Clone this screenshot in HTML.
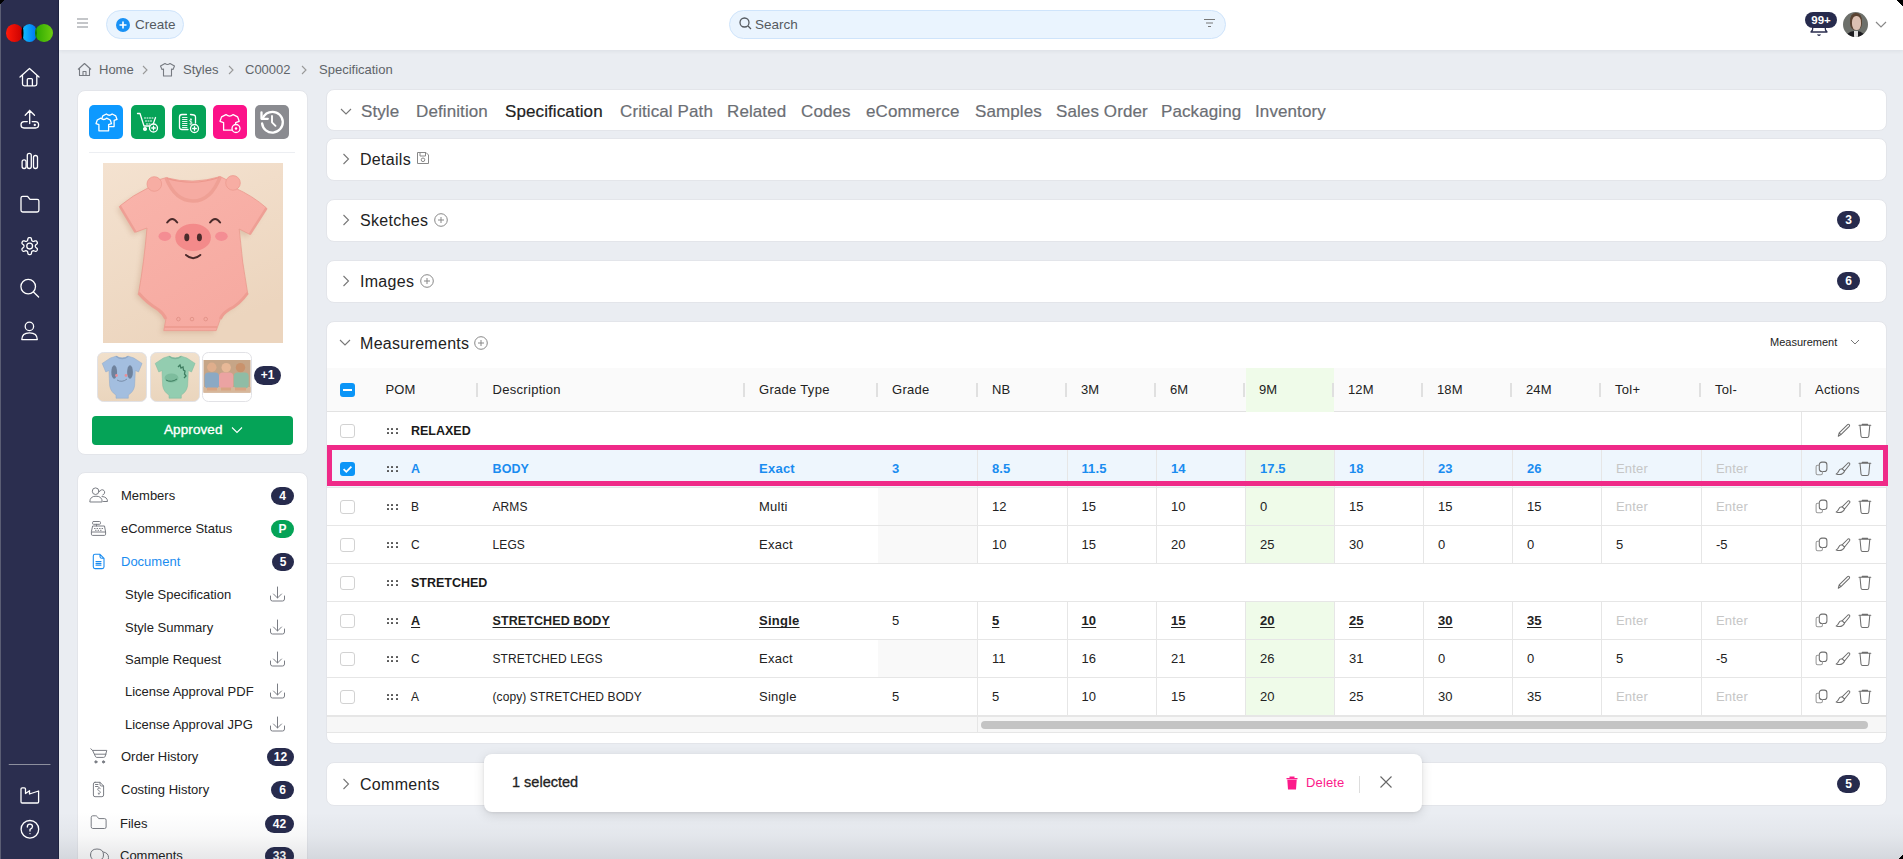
<!DOCTYPE html>
<html><head><meta charset="utf-8">
<style>
*{box-sizing:border-box;margin:0;padding:0}
html,body{width:1903px;height:859px;overflow:hidden}
body{background:#eaedf2;font-family:"Liberation Sans",sans-serif;color:#222;position:relative}
.a{position:absolute}
.t{position:absolute;white-space:nowrap;line-height:1}
#sb{left:0;top:0;width:59px;height:859px;background:#2b2e4f;border-right:1px solid #1f2340}
#hd{left:59px;top:0;width:1844px;height:50px;background:#fff;box-shadow:0 1px 4px rgba(30,40,60,.07)}
.card{position:absolute;background:#fff;border:1px solid #e3e5ea;border-radius:8px}
.badge{position:absolute;background:#272b4d;color:#fff;font-weight:bold;font-size:12px;height:18px;border-radius:9px;text-align:center;line-height:18px}
svg{position:absolute;overflow:visible}
</style></head><body>

<div id="sb" class="a">
 <div class="a" style="left:0;top:0;width:1px;height:859px;background:#5b5e74"></div>
 <div class="a" style="left:0;top:0;width:5px;height:5px;background:linear-gradient(135deg,#000 50%,transparent 50%)"></div>
 <div class="a" style="left:5.5px;top:24px;width:17.5px;height:18px;border-radius:50%;background:linear-gradient(90deg,#ff1a0a,#c80000);mix-blend-mode:normal"></div>
 <div class="a" style="left:21.5px;top:24px;width:15.5px;height:18px;border-radius:50%;background:linear-gradient(90deg,#10c0ff,#0070f0);"></div>
 <div class="a" style="left:35px;top:24px;width:17.5px;height:18px;border-radius:50%;background:linear-gradient(90deg,#2aa800,#6ccc10);"></div>
 <svg width="59" height="60" style="left:0;top:0"><path d="M22.5 26 Q20.5 33 22.5 40 Q24.5 33 22.5 26Z" fill="#000"/><path d="M36 27 Q34.3 33 36 39 Q37.7 33 36 27Z" fill="#0a6a10"/></svg>
 <svg width="59" height="859" style="left:0;top:0" fill="none" stroke="#fff" stroke-width="1.3" stroke-linecap="round" stroke-linejoin="round">
  <path d="M20 77 L29.5 68.5 L39 77 M22.5 75 V84 Q22.5 85.8 24.3 85.8 H35 Q36.8 85.8 36.8 84 V75 M27.3 85.8 V79.5 Q27.3 78.6 28.2 78.6 H31.5 Q32.4 78.6 32.4 79.5 V85.8"/>
  <path d="M29.7 123.5 V110.5 M25.2 115.3 L29.7 110.5 L34.5 115.3 M27.3 121.6 H24 Q21 121.6 21 124.8 Q21 128 24 128 H35.5 Q38.6 128 38.6 124.8 Q38.6 121.6 35.5 121.6 H32.2"/><circle cx="34.8" cy="124.9" r=".5" fill="#fff"/>
  <rect x="22.1" y="159.8" width="4" height="8.7" rx="2"/><rect x="27.3" y="153.3" width="4" height="15.2" rx="2"/><rect x="33.5" y="155.5" width="4" height="13" rx="2"/>
  <path d="M21 198 Q21 196.3 22.7 196.3 H27.6 L30 199.3 H37.2 Q38.9 199.3 38.9 201 V210.2 Q38.9 212 37.2 212 H22.7 Q21 212 21 210.2 Z"/>
  <circle cx="29.66" cy="246.1" r="2.9"/>
  <path d="M35.36 246.10 L35.36 246.30 L35.37 246.50 L35.40 246.70 L35.47 246.92 L35.61 247.15 L35.87 247.42 L36.28 247.75 L36.75 248.13 L37.12 248.52 L37.33 248.89 L37.39 249.22 L37.36 249.53 L37.27 249.81 L37.16 250.09 L37.02 250.35 L36.86 250.60 L36.68 250.84 L36.48 251.05 L36.23 251.23 L35.91 251.34 L35.49 251.35 L34.97 251.22 L34.40 251.01 L33.91 250.82 L33.54 250.73 L33.27 250.72 L33.05 250.77 L32.86 250.85 L32.68 250.94 L32.51 251.04 L32.34 251.14 L32.17 251.25 L32.01 251.37 L31.86 251.54 L31.73 251.78 L31.62 252.14 L31.54 252.66 L31.44 253.26 L31.29 253.78 L31.08 254.14 L30.82 254.35 L30.54 254.48 L30.25 254.55 L29.96 254.59 L29.66 254.60 L29.36 254.59 L29.07 254.55 L28.78 254.48 L28.50 254.35 L28.24 254.14 L28.03 253.78 L27.88 253.26 L27.78 252.66 L27.70 252.14 L27.59 251.78 L27.46 251.54 L27.31 251.37 L27.15 251.25 L26.98 251.14 L26.81 251.04 L26.64 250.94 L26.46 250.85 L26.27 250.77 L26.05 250.72 L25.78 250.73 L25.41 250.82 L24.92 251.01 L24.35 251.22 L23.83 251.35 L23.41 251.34 L23.09 251.23 L22.84 251.05 L22.64 250.84 L22.46 250.60 L22.30 250.35 L22.16 250.09 L22.05 249.81 L21.96 249.53 L21.93 249.22 L21.99 248.89 L22.20 248.52 L22.57 248.13 L23.04 247.75 L23.45 247.42 L23.71 247.15 L23.85 246.92 L23.92 246.70 L23.95 246.50 L23.96 246.30 L23.96 246.10 L23.96 245.90 L23.95 245.70 L23.92 245.50 L23.85 245.28 L23.71 245.05 L23.45 244.78 L23.04 244.45 L22.57 244.07 L22.20 243.68 L21.99 243.31 L21.93 242.98 L21.96 242.67 L22.05 242.39 L22.16 242.11 L22.30 241.85 L22.46 241.60 L22.64 241.36 L22.84 241.15 L23.09 240.97 L23.41 240.86 L23.83 240.85 L24.35 240.98 L24.92 241.19 L25.41 241.38 L25.78 241.47 L26.05 241.48 L26.27 241.43 L26.46 241.35 L26.64 241.26 L26.81 241.16 L26.98 241.06 L27.15 240.95 L27.31 240.83 L27.46 240.66 L27.59 240.42 L27.70 240.06 L27.78 239.54 L27.88 238.94 L28.03 238.42 L28.24 238.06 L28.50 237.85 L28.78 237.72 L29.07 237.65 L29.36 237.61 L29.66 237.60 L29.96 237.61 L30.25 237.65 L30.54 237.72 L30.82 237.85 L31.08 238.06 L31.29 238.42 L31.44 238.94 L31.54 239.54 L31.62 240.06 L31.73 240.42 L31.86 240.66 L32.01 240.83 L32.17 240.95 L32.34 241.06 L32.51 241.16 L32.68 241.26 L32.86 241.35 L33.05 241.43 L33.27 241.48 L33.54 241.47 L33.91 241.38 L34.40 241.19 L34.97 240.98 L35.49 240.85 L35.91 240.86 L36.23 240.97 L36.48 241.15 L36.68 241.36 L36.86 241.60 L37.02 241.85 L37.16 242.11 L37.27 242.39 L37.36 242.67 L37.39 242.98 L37.33 243.31 L37.12 243.68 L36.75 244.07 L36.28 244.45 L35.87 244.78 L35.61 245.05 L35.47 245.28 L35.40 245.50 L35.37 245.70 L35.36 245.90 Z"/>
  <circle cx="28.2" cy="286.6" r="7.3"/><path d="M33.5 292 L38.6 297"/>
  <circle cx="29.4" cy="326.4" r="4.2"/><path d="M21.8 339.6 Q21.8 332.8 29.5 332.8 Q37.3 332.8 37.3 339.6 Z"/>
  <path d="M9.2 764.5 H50" stroke="#8d8f9e" stroke-width="1.2"/>
  <path d="M21 789 Q21 787.8 22.2 787.8 H24.3 Q25.5 787.8 25.5 789 V793.5 L29.5 790.7 V794 L38.6 791 V801.8 Q38.6 803 37.4 803 H22.2 Q21 803 21 801.8 Z"/>
  <circle cx="29.9" cy="829.3" r="8.8"/><path d="M27.3 827 Q27.3 824.2 29.9 824.2 Q32.5 824.2 32.5 826.6 Q32.5 828.3 30 829.4 V831"/><circle cx="30" cy="833.6" r=".7" fill="#fff" stroke="none"/>
 </svg>
</div>
<div id="hd" class="a">
 <svg width="12" height="10" style="left:18px;top:18px" stroke="#8a8d93" stroke-width="1.2"><path d="M0 1H11M0 5H11M0 9H11"/></svg>
 <div class="a" style="left:47px;top:10px;width:78px;height:29px;border-radius:15px;background:#eaf4fe;border:1px solid #cfe4fb"></div>
 <div class="a" style="left:57px;top:17.5px;width:14px;height:14px;border-radius:50%;background:#1891f5"></div>
 <svg width="14" height="14" style="left:57px;top:17.5px" stroke="#fff" stroke-width="1.6"><path d="M7 3.5V10.5M3.5 7H10.5"/></svg>
 <div class="t" style="left:76px;top:18px;font-size:13.5px;color:#555a60">Create</div>
 <div class="a" style="left:670px;top:10px;width:497px;height:29px;border-radius:15px;background:#eaf4fe;border:1px solid #cfe4fb"></div>
 <svg width="14" height="14" style="left:680px;top:17px" fill="none" stroke="#555a60" stroke-width="1.3"><circle cx="5.5" cy="5.5" r="4.5"/><path d="M9 9L12 12"/></svg>
 <div class="t" style="left:696px;top:18px;font-size:13.5px;color:#555a60">Search</div>
 <svg width="14" height="12" style="left:1144px;top:18px" stroke="#777" stroke-width="1.2"><path d="M1 1.5H12M3 5H10M5 8.5H8"/></svg>
 <svg width="24" height="26" style="left:1748px;top:10px" fill="#fff" stroke="#2b2e4f" stroke-width="1.3" stroke-linejoin="round"><path d="M6 15 Q6 11 12 11 Q18 11 18 15 L18.5 20 L20 22 H4 L5.5 20 Z"/><path d="M10.5 24.5 L12 25.5 L13.5 24.5" fill="none" stroke-width="1.2"/></svg>
 <div class="badge" style="left:1746px;top:12px;width:32px;height:16px;line-height:16px;font-size:11.5px;border-radius:8px">99+</div>
 <div class="a" style="left:1784px;top:12px;width:25px;height:25px;border-radius:50%;overflow:hidden;background:#6d706b">
   <div class="a" style="left:7px;top:1px;width:12px;height:17px;border-radius:45% 45% 40% 40%;background:#5a4332"></div>
   <div class="a" style="left:8.5px;top:4px;width:9px;height:14px;border-radius:45% 45% 45% 45%;background:#dcc0b2"></div>
   <div class="a" style="left:2px;top:18.5px;width:21px;height:10px;border-radius:9px 9px 0 0;background:#1c1c20"></div>
   <div class="a" style="left:10.5px;top:19px;width:4.5px;height:7px;background:#e0e0e0"></div>
 </div>
 <svg width="12" height="8" style="left:1816px;top:21px" fill="none" stroke="#888" stroke-width="1.2"><path d="M1 1L6 6L11 1"/></svg>
</div>


<!-- breadcrumb -->
<svg width="16" height="16" style="left:77px;top:62px" fill="none" stroke="#777b82" stroke-width="1.1" stroke-linejoin="round"><path d="M1 7.5L7.5 1.5L14 7.5M2.5 6.3V13.5H12.5V6.3M6 13.5V9.5H9V13.5"/></svg>
<div class="t" style="left:99px;top:63px;font-size:13px;color:#606469">Home</div>
<svg width="8" height="10" style="left:141px;top:65px" fill="none" stroke="#999" stroke-width="1.1"><path d="M2 1L6 5L2 9"/></svg>
<svg width="18" height="16" style="left:159px;top:62px" fill="none" stroke="#777b82" stroke-width="1.1" stroke-linejoin="round"><path d="M6 1.5L1.5 4L3 7.5L4.5 7V14H12.5V7L14 7.5L15.5 4L11 1.5Q8.5 3.5 6 1.5Z"/></svg>
<div class="t" style="left:183px;top:63px;font-size:13px;color:#606469">Styles</div>
<svg width="8" height="10" style="left:227px;top:65px" fill="none" stroke="#999" stroke-width="1.1"><path d="M2 1L6 5L2 9"/></svg>
<div class="t" style="left:245px;top:63px;font-size:13px;color:#606469">C00002</div>
<svg width="8" height="10" style="left:300px;top:65px" fill="none" stroke="#999" stroke-width="1.1"><path d="M2 1L6 5L2 9"/></svg>
<div class="t" style="left:319px;top:63px;font-size:13px;color:#606469">Specification</div>

<!-- left card 1 -->
<div class="card" style="left:77px;top:90px;width:231px;height:365px"></div>
<div class="a" style="left:89px;top:105px;width:34px;height:34px;border-radius:5px;background:#0d99ff"></div>
<div class="a" style="left:131px;top:105px;width:34px;height:34px;border-radius:5px;background:#05a357"></div>
<div class="a" style="left:172px;top:105px;width:34px;height:34px;border-radius:5px;background:#05a357"></div>
<div class="a" style="left:213px;top:105px;width:34px;height:34px;border-radius:5px;background:#fc1289"></div>
<div class="a" style="left:255px;top:105px;width:34px;height:34px;border-radius:5px;background:#8a8b90"></div>
<svg width="220" height="40" style="left:89px;top:105px" fill="none" stroke="#fff" stroke-width="1.3" stroke-linejoin="round" stroke-linecap="round">
<path transform="translate(12.5 9) scale(0.97)" d="M5 0 L1.3 1.9 L0 5.6 L3 6.6 V13 H13 V6.6 L16 5.6 L14.7 1.9 L11 0 Q8 2.6 5 0 Z" fill="#0d99ff" stroke-width="1.34"/><path transform="translate(7 13.2) scale(0.97)" d="M5 0 L1.3 1.9 L0 5.6 L3 6.6 V13 H13 V6.6 L16 5.6 L14.7 1.9 L11 0 Q8 2.6 5 0 Z" fill="#0d99ff" stroke-width="1.34"/>
<path d="M48.5 8.5 H51 L55 21 H63.5 L66.5 12.5"/><circle cx="56" cy="24" r="1.4" fill="#fff"/>
<path d="M55.5 13h1M58 13h1M60.5 13h1M63 13h1M56.5 16h1M59 16h1M61.5 16h1M57.5 19h1M60 19h1" stroke-width="1"/>
<circle cx="64.5" cy="23" r="4" fill="#05a357"/><path d="M64.5 21.2V24.8M62.7 23H66.3"/>
<path d="M97.5 9.5 H93 Q90.5 9.5 90.5 12 V22 Q90.5 24.5 93 24.5 H99 M101.5 9.5 Q106.5 9.5 106.5 12 V18"/>
<path d="M93.5 12.5H98M93.5 14.5H98M93.5 16.5H98M93.5 18.5H98M93.5 20.5H98M93.5 22.5H98" stroke-width=".9"/>
<path d="M102.6 14.5 Q101 14 100.6 15.3 Q100.6 16.5 102 16.8 Q103.4 17.2 103 18.5 Q102.5 19.5 100.8 19 M101.9 13.5V20" stroke-width=".8"/>
<circle cx="105.5" cy="23.5" r="4" fill="#05a357"/><path d="M105.5 21.7V25.3M103.7 23.5H107.3"/>
<path transform="translate(131 9.6) scale(1.2)" d="M5 0 L1.3 1.9 L0 5.6 L3 6.6 V13 H13 V6.6 L16 5.6 L14.7 1.9 L11 0 Q8 2.6 5 0 Z" fill="#fc1289" stroke-width="1.08"/>
<circle cx="147" cy="23.5" r="4" fill="#fc1289"/><circle cx="147" cy="23.5" r="1.2" fill="#fff" stroke="none"/>
<path d="M173.5 13.5 Q176.5 6.8 183.5 6.8 A10.4 10.4 0 1 1 173.1 18.5" stroke-width="2.3"/><path d="M172.5 7.5 V13.8 H178.8" stroke-width="2.3"/><path d="M183 11V17.3L186.5 20.8" stroke-width="1.9"/>
</svg>
<div class="a" style="left:89px;top:152px;width:206px;height:1px;background:#eceef2"></div>

<!-- main product image -->
<svg width="180" height="180" style="left:103px;top:163px">
 <defs>
  <linearGradient id="bgp" x1="0" y1="0" x2="0.4" y2="1"><stop offset="0" stop-color="#f4e2d0"/><stop offset="1" stop-color="#ecd5be"/></linearGradient>
  <linearGradient id="ones" x1="0" y1="0" x2="0.6" y2="1"><stop offset="0" stop-color="#f9b4ab"/><stop offset="1" stop-color="#f6aaa1"/></linearGradient>
  <filter id="sh" x="-10%" y="-10%" width="120%" height="120%"><feGaussianBlur stdDeviation="2.5"/></filter>
 </defs>
 <rect width="180" height="180" fill="url(#bgp)"/>
 <path transform="translate(-3 3)" d="M62.9 14.7 Q90 22 117.3 13.6 L124 17 L132 25 Q150 33 163.5 45 L146.7 71.3 L136.2 66 Q139 100 144.6 130 Q136 142 125.7 146.7 Q119 151 117.3 156 L113.2 167.6 L60.8 167.6 L62.9 156 Q61 151 55.5 146.7 Q44 140 35.6 130 Q41 100 44 65 L32.5 69.2 L16.8 43 Q30 32 45 25 L55 17 Z" fill="#c9a68c" opacity=".45" filter="url(#sh)"/>
 <path d="M62.9 14.7 Q90 22 117.3 13.6 L124 17 L132 25 Q150 33 163.5 45 L146.7 71.3 L136.2 66 Q139 100 144.6 130 Q136 142 125.7 146.7 Q119 151 117.3 156 L113.2 167.6 L60.8 167.6 L62.9 156 Q61 151 55.5 146.7 Q44 140 35.6 130 Q41 100 44 65 L32.5 69.2 L16.8 43 Q30 32 45 25 L55 17 Z" fill="url(#ones)" stroke="#eb998e" stroke-width=".8"/>
 <path d="M62.9 14.7 Q90 24 117.3 13.6 Q106 38 90 38 Q74 38 62.9 14.7 Z" fill="#f6aba2"/>
 <path d="M62.9 14.7 Q72 38 90 38 Q108 38 117.3 13.6" fill="none" stroke="#efa095" stroke-width="3.5"/>
 <path d="M64 15.5 Q90 23.5 116 14.5" fill="none" stroke="#ec978c" stroke-width="1.2"/>
 <circle cx="51.3" cy="21" r="7.3" fill="#f7ada3" stroke="#ec9a8f" stroke-width=".8"/><circle cx="130" cy="19.9" r="7.3" fill="#f7ada3" stroke="#ec9a8f" stroke-width=".8"/>
 <path d="M16.8 43 L32.5 69.2 M163.5 45 L146.7 71.3" stroke="#ee9f95" stroke-width="2.5"/>
 <path d="M35.6 130 Q44 140 55.5 146.7 Q61 151 62.9 156 M144.6 130 Q136 142 125.7 146.7 Q119 151 117.3 156" fill="none" stroke="#ee9d92" stroke-width="3"/>
 <path d="M61 164 H114" stroke="#ee9d92" stroke-width="2"/>
 <circle cx="75.4" cy="156.1" r="1.8" fill="#f4aca2" stroke="#dc8a80" stroke-width=".7"/><circle cx="89" cy="156.1" r="1.8" fill="#f4aca2" stroke="#dc8a80" stroke-width=".7"/><circle cx="102.7" cy="156.1" r="1.8" fill="#f4aca2" stroke="#dc8a80" stroke-width=".7"/>
 <ellipse cx="61.8" cy="73.3" rx="6.3" ry="4.6" fill="#f48d93"/><ellipse cx="118.4" cy="73.3" rx="6.3" ry="4.6" fill="#f48d93"/>
 <ellipse cx="90.1" cy="74.4" rx="17.8" ry="13.6" fill="#f38a8a"/>
 <ellipse cx="83.8" cy="74.4" rx="2.5" ry="3.8" fill="#4a2b2b"/><ellipse cx="96.4" cy="74.4" rx="2.5" ry="3.8" fill="#4a2b2b"/>
 <path d="M64.2 59.5 Q69.2 52.5 74.2 59.5 M107.1 59.5 Q112.1 52.5 117.1 59.5 M83 92 Q90.1 98.5 97.3 92" stroke="#4a2b2b" stroke-width="2" fill="none" stroke-linecap="round"/>
</svg>
<!-- thumbnails -->
<svg width="160" height="52" style="left:96px;top:351px">
 <defs><linearGradient id="tb" x1="0" y1="0" x2="0" y2="1"><stop offset="0" stop-color="#f1e0cb"/><stop offset="1" stop-color="#ead5bd"/></linearGradient></defs>
 <rect x="1.5" y="1.5" width="49" height="49" rx="6" fill="url(#tb)" stroke="#e2e2e6"/>
<path transform="translate(0 0)" d="M20 5.2 Q26.15 8.5 32.3 5.2 L37.9 7 L46.1 12.4 L42.5 21 L39.3 19.5 Q39 28 38.6 34.9 Q37.5 41 32.3 44 V47.2 H20 V44 Q14.8 41 13.7 34.9 Q13.3 28 13 19.5 L9.8 21 L6.2 12.4 L14.4 7 Z" fill="#a3bedf" stroke="#8fa9c9" stroke-width=".5"/>
 <path d="M20 5.2 Q26.15 10 32.3 5.2" fill="none" stroke="#8ea8c8" stroke-width="1.2"/>
 <ellipse cx="18.2" cy="21" rx="2.9" ry="6.8" fill="#6f829c"/><ellipse cx="34" cy="21" rx="2.9" ry="6.8" fill="#6f829c"/>
 <circle cx="20.5" cy="24.5" r="1.4" fill="#e88f98"/><circle cx="30" cy="24.5" r="1.4" fill="#e88f98"/>
 <path d="M21 29 Q26 32 31 28" fill="none" stroke="#6f829c" stroke-width=".8"/>
 <rect x="54.5" y="1.5" width="49" height="49" rx="6" fill="url(#tb)" stroke="#e2e2e6"/>
<path transform="translate(53 0)" d="M20 5.2 Q26.15 8.5 32.3 5.2 L37.9 7 L46.1 12.4 L42.5 21 L39.3 19.5 Q39 28 38.6 34.9 Q37.5 41 32.3 44 V47.2 H20 V44 Q14.8 41 13.7 34.9 Q13.3 28 13 19.5 L9.8 21 L6.2 12.4 L14.4 7 Z" fill="#93cdb0" stroke="#7fb99c" stroke-width=".5"/>
 <path d="M73 5.2 Q79.15 10 85.3 5.2" fill="none" stroke="#7db59a" stroke-width="1.2"/>
 <ellipse cx="75.5" cy="27" rx="7" ry="4.5" fill="#7dbc9d"/>
 <path d="M70 29 Q75 32 81 28" fill="none" stroke="#3e7d60" stroke-width="1"/>
 <path d="M82 16 L84 14 L85 17 L87 16 L87.5 19 L89 20 L88.5 23 L90 25 L88 27" fill="none" stroke="#3e7d60" stroke-width="1.3"/>
 <rect x="106.5" y="1.5" width="49" height="49" rx="6" fill="#fff" stroke="#e2e2e6"/>
 <rect x="107.5" y="9" width="47" height="32.6" fill="#c6a587"/>
 <rect x="107.5" y="36" width="47" height="5.6" fill="#d7b79a"/>
 <rect x="108.6" y="21.5" width="14.4" height="16" rx="4" fill="#8ba9c4"/><rect x="123" y="21.5" width="14.3" height="16" rx="4" fill="#eba3a2"/><rect x="137.8" y="21.5" width="14.9" height="16" rx="4" fill="#8fbca5"/>
 <circle cx="115.8" cy="16.3" r="4.7" fill="#dfae8c"/><circle cx="130.2" cy="16.6" r="4.7" fill="#e7b897"/><circle cx="144.5" cy="16.6" r="4.7" fill="#c9926c"/>
 <path d="M111 38 H121 M125 38 H135 M139 38 H150" stroke="#d9a583" stroke-width="3"/>
</svg>
<div class="badge" style="left:254px;top:366px;width:27px;height:19px;border-radius:10px;line-height:19px;font-size:12px">+1</div>
<div class="a" style="left:92px;top:416px;width:201px;height:29px;border-radius:4px;background:#05a357"></div>
<div class="t" style="left:164px;top:422.5px;font-size:13.5px;color:#fff;-webkit-text-stroke:0.35px #fff;letter-spacing:0.1px">Approved</div>
<svg width="12" height="8" style="left:231px;top:426px" fill="none" stroke="#fff" stroke-width="1.1"><path d="M1 1.5L6 6.5L11 1.5"/></svg>

<!-- left card 2 -->
<div class="card" style="left:77px;top:472px;width:231px;height:420px"></div>
<svg width="230" height="400" style="left:78px;top:472px" fill="none" stroke="#7a7d84" stroke-width="1" stroke-linejoin="round" stroke-linecap="round">
 <!-- members -->
 <path d="M21.5 19.5 A2.7 2.7 0 1 1 24.8 23" /><path d="M24 24.5 Q29.5 24.8 29.5 29.5 H25.5"/>
 <circle cx="17.6" cy="19.2" r="3.3" fill="#fff"/><path d="M11.8 29.6 Q11.8 24.2 18 24.2 Q24.2 24.2 24.2 29.6 Z" fill="#fff"/>
 <!-- register -->
 <rect x="14.5" y="49.5" width="8" height="2.8" rx="1"/><path d="M18.5 52.3 V54"/>
 <path d="M15 54 H26.5 L27.6 60 V62.2 Q27.6 63.4 26.4 63.4 H14.6 Q13.4 63.4 13.4 62.2 V60 Z M13.4 60 H27.6"/>
 <path d="M16.5 56.5h.6M19 56.5h.6M21.5 56.5h.6M24 56.5h.6M17.5 58.3h.6M20 58.3h.6M22.5 58.3h.6" stroke-width="1"/>
 <!-- document (blue) -->
 <path d="M17 82.3 H22 L26 86.3 V94.8 Q26 96.6 24.2 96.6 H17 Q15.3 96.6 15.3 94.8 V84 Q15.3 82.3 17 82.3 Z M22 82.3 V84.5 Q22 86.3 23.8 86.3 H26" stroke="#1a8cf0" stroke-width="1.1"/>
 <path d="M18 89.5 H23 M18 91.3 H23 M18 93.1 H23" stroke="#1a8cf0" stroke-width="1.2"/>
 <!-- downloads -->
 <g id="dl"><path d="M199.5 115 V126 M195.5 122 L199.5 126 L203.5 122 M192.5 124 V127 Q192.5 129 194.5 129 H204.5 Q206.5 129 206.5 127 V124"/></g>
 <path d="M199.5 148 V159 M195.5 155 L199.5 159 L203.5 155 M192.5 157 V160 Q192.5 162 194.5 162 H204.5 Q206.5 162 206.5 160 V157"/>
 <path d="M199.5 180 V191 M195.5 187 L199.5 191 L203.5 187 M192.5 189 V192 Q192.5 194 194.5 194 H204.5 Q206.5 194 206.5 192 V189"/>
 <path d="M199.5 212 V223 M195.5 219 L199.5 223 L203.5 219 M192.5 221 V224 Q192.5 226 194.5 226 H204.5 Q206.5 226 206.5 224 V221"/>
 <path d="M199.5 245 V256 M195.5 252 L199.5 256 L203.5 252 M192.5 254 V257 Q192.5 259 194.5 259 H204.5 Q206.5 259 206.5 257 V254"/>
 <!-- cart -->
 <path d="M12.8 276.8 L14.6 278.4 H28.8 L27.2 284.2 Q26.9 285.4 25.7 285.4 H18.8 Q17.6 285.4 17.3 284.2 L14.6 278.4 M16.6 282.2 H28"/>
 <circle cx="17.9" cy="289.9" r="1.1" fill="#7a7d84"/><circle cx="25.5" cy="289.9" r="1.1" fill="#7a7d84"/>
 <!-- costing -->
 <path d="M17 310.3 H22 L25.6 314 V323 Q25.6 324.7 23.9 324.7 H17 Q15.4 324.7 15.4 323 V312 Q15.4 310.3 17 310.3 Z M22 310.3 V312.5 Q22 314 23.5 314 H25.6 M17.5 312.5 H20 M17.5 314.5 H20"/>
 <path d="M22.3 316.5 Q21.4 315.8 20.4 316.2 Q19.3 316.8 19.9 318 Q20.4 318.8 21.3 319 Q22.6 319.4 22.3 320.7 Q21.8 321.8 20.2 321.3 M20.9 315.3 V316 M20.9 321.6 V322.4" stroke-width=".9"/>
 <!-- folder -->
 <path d="M13.2 345.3 Q13.2 343.8 14.7 343.8 H17.8 Q18.6 343.8 19.2 344.6 L20.7 346.6 H26.6 Q28.1 346.6 28.1 348.1 V355 Q28.1 356.5 26.6 356.5 H14.7 Q13.2 356.5 13.2 355 Z"/>
 <!-- comments -->
 <path d="M12.5 383 Q12.5 377 19 377 Q25.5 377 25.5 383 Q25.5 388.5 19 388.5 Q17.5 388.5 16.3 388 L13.3 389.5 L14 386.8 Q12.5 385.3 12.5 383 Z M25.5 380 Q30.5 381 30.5 385.5 Q30.5 387.5 29.5 388.8"/>
</svg>
<div class="t" style="left:121px;top:489px;font-size:13px;color:#222">Members</div>
<div class="badge" style="left:271px;top:487px;width:23px">4</div>
<div class="t" style="left:121px;top:522px;font-size:13px;color:#222">eCommerce Status</div>
<div class="badge" style="left:271px;top:520px;width:23px;background:#05a357">P</div>
<div class="t" style="left:121px;top:555px;font-size:13px;color:#1a8cf0">Document</div>
<div class="badge" style="left:272px;top:553px;width:22px">5</div>
<div class="t" style="left:125px;top:588px;font-size:13px;color:#222">Style Specification</div>
<div class="t" style="left:125px;top:621px;font-size:13px;color:#222">Style Summary</div>
<div class="t" style="left:125px;top:653px;font-size:13px;color:#222">Sample Request</div>
<div class="t" style="left:125px;top:685px;font-size:13px;color:#222">License Approval PDF</div>
<div class="t" style="left:125px;top:718px;font-size:13px;color:#222">License Approval JPG</div>
<div class="t" style="left:121px;top:750px;font-size:13px;color:#222">Order History</div>
<div class="badge" style="left:267px;top:748px;width:27px">12</div>
<div class="t" style="left:121px;top:783px;font-size:13px;color:#222">Costing History</div>
<div class="badge" style="left:271px;top:781px;width:23px">6</div>
<div class="t" style="left:120px;top:817px;font-size:13px;color:#222">Files</div>
<div class="badge" style="left:265px;top:815px;width:29px">42</div>
<div class="t" style="left:120px;top:849px;font-size:13px;color:#222">Comments</div>
<div class="badge" style="left:265px;top:847px;width:29px">33</div>

<!-- main cards -->
<div class="card" style="left:326px;top:89px;width:1561px;height:42px"></div>
<svg width="12" height="8" style="left:340px;top:108px" fill="none" stroke="#777" stroke-width="1.1"><path d="M1 1L6 6L11 1"/></svg>
<div class="t" style="left:361px;top:103px;font-size:17px;letter-spacing:0.1px;-webkit-text-stroke:0.2px #6b6e74;color:#6b6e74">Style</div>
<div class="t" style="left:416px;top:103px;font-size:17px;letter-spacing:0.1px;-webkit-text-stroke:0.2px #6b6e74;color:#6b6e74">Definition</div>
<div class="t" style="left:505px;top:103px;font-size:17px;letter-spacing:0.1px;-webkit-text-stroke:0.2px #222;color:#222">Specification</div>
<div class="t" style="left:620px;top:103px;font-size:17px;letter-spacing:0.1px;-webkit-text-stroke:0.2px #6b6e74;color:#6b6e74">Critical Path</div>
<div class="t" style="left:727px;top:103px;font-size:17px;letter-spacing:0.1px;-webkit-text-stroke:0.2px #6b6e74;color:#6b6e74">Related</div>
<div class="t" style="left:801px;top:103px;font-size:17px;letter-spacing:0.1px;-webkit-text-stroke:0.2px #6b6e74;color:#6b6e74">Codes</div>
<div class="t" style="left:866px;top:103px;font-size:17px;letter-spacing:0.1px;-webkit-text-stroke:0.2px #6b6e74;color:#6b6e74">eCommerce</div>
<div class="t" style="left:975px;top:103px;font-size:17px;letter-spacing:0.1px;-webkit-text-stroke:0.2px #6b6e74;color:#6b6e74">Samples</div>
<div class="t" style="left:1056px;top:103px;font-size:17px;letter-spacing:0.1px;-webkit-text-stroke:0.2px #6b6e74;color:#6b6e74">Sales Order</div>
<div class="t" style="left:1161px;top:103px;font-size:17px;letter-spacing:0.1px;-webkit-text-stroke:0.2px #6b6e74;color:#6b6e74">Packaging</div>
<div class="t" style="left:1255px;top:103px;font-size:17px;letter-spacing:0.1px;-webkit-text-stroke:0.2px #6b6e74;color:#6b6e74">Inventory</div>
<div class="card" style="left:326px;top:138px;width:1561px;height:43px"></div>
<svg width="8" height="12" style="left:342px;top:153px" fill="none" stroke="#777" stroke-width="1.1"><path d="M1.5 1L6.5 6L1.5 11"/></svg>
<div class="t" style="left:360px;top:152px;font-size:16px;letter-spacing:0.3px;color:#222">Details</div>
<svg width="14" height="14" style="left:416px;top:151px" fill="none" stroke="#888" stroke-width="1"><path d="M1.5 1.5H10L12.5 4V12.5H1.5Z M4 1.5V5H9.5V1.5"/><circle cx="7" cy="8.8" r="1.8"/></svg>
<div class="card" style="left:326px;top:199px;width:1561px;height:43px"></div>
<svg width="8" height="12" style="left:342px;top:214px" fill="none" stroke="#777" stroke-width="1.1"><path d="M1.5 1L6.5 6L1.5 11"/></svg>
<div class="t" style="left:360px;top:213px;font-size:16px;letter-spacing:0.3px;color:#222">Sketches</div>
<svg width="14" height="14" style="left:434px;top:213px" fill="none" stroke="#888" stroke-width="1"><circle cx="7" cy="7" r="6.3"/><path d="M7 4V10M4 7H10"/></svg>
<div class="badge" style="left:1837px;top:211px;width:23px">3</div>
<div class="card" style="left:326px;top:260px;width:1561px;height:43px"></div>
<svg width="8" height="12" style="left:342px;top:275px" fill="none" stroke="#777" stroke-width="1.1"><path d="M1.5 1L6.5 6L1.5 11"/></svg>
<div class="t" style="left:360px;top:274px;font-size:16px;letter-spacing:0.3px;color:#222">Images</div>
<svg width="14" height="14" style="left:420px;top:274px" fill="none" stroke="#888" stroke-width="1"><circle cx="7" cy="7" r="6.3"/><path d="M7 4V10M4 7H10"/></svg>
<div class="badge" style="left:1837px;top:272px;width:23px">6</div>
<div class="card" style="left:326px;top:321px;width:1561px;height:423px;overflow:hidden"></div>
<svg width="12" height="8" style="left:339px;top:339px" fill="none" stroke="#777" stroke-width="1.1"><path d="M1 1L6 6L11 1"/></svg>
<div class="t" style="left:360px;top:336px;font-size:16px;letter-spacing:0.3px;color:#222">Measurements</div>
<svg width="14" height="14" style="left:474px;top:336px" fill="none" stroke="#888" stroke-width="1"><circle cx="7" cy="7" r="6.3"/><path d="M7 4V10M4 7H10"/></svg>
<div class="t" style="left:1770px;top:337px;font-size:11px;color:#222">Measurement</div>
<svg width="10" height="7" style="left:1850px;top:339px" fill="none" stroke="#777" stroke-width="1"><path d="M1 1L5 5L9 1"/></svg>
<div class="a" style="left:327px;top:368px;width:1559px;height:44px;background:#fafafa;border-bottom:1px solid #e2e2e2"></div>
<div class="a" style="left:1246px;top:368px;width:88px;height:347px;background:#effbe9"></div>
<div class="a" style="left:476px;top:383px;width:1.5px;height:14px;background:#e0e0e0"></div>
<div class="a" style="left:743px;top:383px;width:1.5px;height:14px;background:#e0e0e0"></div>
<div class="a" style="left:876px;top:383px;width:1.5px;height:14px;background:#e0e0e0"></div>
<div class="a" style="left:976px;top:383px;width:1.5px;height:14px;background:#e0e0e0"></div>
<div class="a" style="left:1065px;top:383px;width:1.5px;height:14px;background:#e0e0e0"></div>
<div class="a" style="left:1154px;top:383px;width:1.5px;height:14px;background:#e0e0e0"></div>
<div class="a" style="left:1243px;top:383px;width:1.5px;height:14px;background:#e0e0e0"></div>
<div class="a" style="left:1332px;top:383px;width:1.5px;height:14px;background:#e0e0e0"></div>
<div class="a" style="left:1421px;top:383px;width:1.5px;height:14px;background:#e0e0e0"></div>
<div class="a" style="left:1510px;top:383px;width:1.5px;height:14px;background:#e0e0e0"></div>
<div class="a" style="left:1599px;top:383px;width:1.5px;height:14px;background:#e0e0e0"></div>
<div class="a" style="left:1699px;top:383px;width:1.5px;height:14px;background:#e0e0e0"></div>
<div class="a" style="left:1799px;top:383px;width:1.5px;height:14px;background:#e0e0e0"></div>
<div class="t" style="left:385.5px;top:382.8px;font-size:13px;letter-spacing:0.1px;color:#222">POM</div>
<div class="t" style="left:492.5px;top:382.8px;font-size:13px;letter-spacing:0.3px;color:#222">Description</div>
<div class="t" style="left:759px;top:382.8px;font-size:13px;letter-spacing:0.3px;color:#222">Grade Type</div>
<div class="t" style="left:892px;top:382.8px;font-size:13px;letter-spacing:0.3px;color:#222">Grade</div>
<div class="t" style="left:992px;top:382.8px;font-size:13px;letter-spacing:0.1px;color:#222">NB</div>
<div class="t" style="left:1081px;top:382.8px;font-size:13px;letter-spacing:0.1px;color:#222">3M</div>
<div class="t" style="left:1170px;top:382.8px;font-size:13px;letter-spacing:0.1px;color:#222">6M</div>
<div class="t" style="left:1259px;top:382.8px;font-size:13px;letter-spacing:0.1px;color:#222">9M</div>
<div class="t" style="left:1348px;top:382.8px;font-size:13px;letter-spacing:0.1px;color:#222">12M</div>
<div class="t" style="left:1437px;top:382.8px;font-size:13px;letter-spacing:0.1px;color:#222">18M</div>
<div class="t" style="left:1526px;top:382.8px;font-size:13px;letter-spacing:0.1px;color:#222">24M</div>
<div class="t" style="left:1615px;top:382.8px;font-size:13px;letter-spacing:0.3px;color:#222">Tol+</div>
<div class="t" style="left:1715px;top:382.8px;font-size:13px;letter-spacing:0.3px;color:#222">Tol-</div>
<div class="t" style="left:1815px;top:382.8px;font-size:13px;letter-spacing:0.3px;color:#222">Actions</div>
<div class="a" style="left:340px;top:383px;width:15px;height:14px;border-radius:3px;background:#0b95f7"></div>
<div class="a" style="left:343px;top:389px;width:9px;height:2px;background:#fff"></div>
<div class="a" style="left:327px;top:412px;width:1559px;height:38px;background:#fff;border-bottom:1px solid #e6e6e6"></div>
<div class="a" style="left:1801px;top:412px;width:1px;height:37px;background:#e6e6e6"></div>
<div class="a" style="left:340px;top:424px;width:15px;height:14px;border-radius:3px;border:1px solid #d2d2d2;background:#fff"></div>
<div class="a" style="left:387.0px;top:428.0px;width:2px;height:2px;border-radius:.5px;background:#555"></div><div class="a" style="left:387.0px;top:432.4px;width:2px;height:2px;border-radius:.5px;background:#555"></div><div class="a" style="left:391.3px;top:428.0px;width:2px;height:2px;border-radius:.5px;background:#555"></div><div class="a" style="left:391.3px;top:432.4px;width:2px;height:2px;border-radius:.5px;background:#555"></div><div class="a" style="left:395.6px;top:428.0px;width:2px;height:2px;border-radius:.5px;background:#555"></div><div class="a" style="left:395.6px;top:432.4px;width:2px;height:2px;border-radius:.5px;background:#555"></div>
<div class="t" style="left:411px;top:425.0px;font-size:12.5px;font-weight:bold;color:#1a1a1a">RELAXED</div>
<svg width="16" height="16" style="left:1837px;top:423px" fill="none" stroke="#6e6e6e" stroke-width="1.05" stroke-linejoin="round" stroke-linecap="round"><path d="M1.3 13.2 L2.2 9.8 L10.6 1.6 Q11.4 0.9 12.2 1.7 Q13 2.5 12.3 3.3 L3.9 11.6 Z M2.2 9.8 L3.9 11.6"/></svg>
<svg width="16" height="16" style="left:1858px;top:423px" fill="none" stroke="#6e6e6e" stroke-width="1.05" stroke-linejoin="round" stroke-linecap="round"><path d="M1 2.3 H12.8 M4.2 2.3 V1.2 H9.6 V2.3 M2 2.3 L3 13 Q3.2 14.5 4.6 14.5 H9.2 Q10.6 14.5 10.8 13 L11.8 2.3"/></svg>
<div class="a" style="left:327px;top:450px;width:1559px;height:38px;background:#eef6fd;border-bottom:1px solid #e6e6e6"></div>
<div class="a" style="left:1246px;top:450px;width:88px;height:37px;background:#eaf8ea"></div>
<div class="a" style="left:977px;top:450px;width:1px;height:37px;background:#e6e6e6"></div>
<div class="a" style="left:1067px;top:450px;width:1px;height:37px;background:#e6e6e6"></div>
<div class="a" style="left:1156px;top:450px;width:1px;height:37px;background:#e6e6e6"></div>
<div class="a" style="left:1245px;top:450px;width:1px;height:37px;background:#e6e6e6"></div>
<div class="a" style="left:1334px;top:450px;width:1px;height:37px;background:#e6e6e6"></div>
<div class="a" style="left:1423px;top:450px;width:1px;height:37px;background:#e6e6e6"></div>
<div class="a" style="left:1512px;top:450px;width:1px;height:37px;background:#e6e6e6"></div>
<div class="a" style="left:1601px;top:450px;width:1px;height:37px;background:#e6e6e6"></div>
<div class="a" style="left:1701px;top:450px;width:1px;height:37px;background:#e6e6e6"></div>
<div class="a" style="left:1801px;top:450px;width:1px;height:37px;background:#e6e6e6"></div>
<div class="a" style="left:340px;top:462px;width:15px;height:14px;border-radius:3px;background:#0b95f7"></div>
<svg width="15" height="14" style="left:340px;top:462px" fill="none" stroke="#fff" stroke-width="1.8"><path d="M3.6 7.2 L6.3 9.8 L11.4 4.6"/></svg>
<div class="a" style="left:387.0px;top:466.0px;width:2px;height:2px;border-radius:.5px;background:#555"></div><div class="a" style="left:387.0px;top:470.4px;width:2px;height:2px;border-radius:.5px;background:#555"></div><div class="a" style="left:391.3px;top:466.0px;width:2px;height:2px;border-radius:.5px;background:#555"></div><div class="a" style="left:391.3px;top:470.4px;width:2px;height:2px;border-radius:.5px;background:#555"></div><div class="a" style="left:395.6px;top:466.0px;width:2px;height:2px;border-radius:.5px;background:#555"></div><div class="a" style="left:395.6px;top:470.4px;width:2px;height:2px;border-radius:.5px;background:#555"></div>
<div class="t" style="left:411px;top:462.75px;font-size:12.5px;letter-spacing:0.1px;color:#1a8cf0;font-weight:bold;">A</div>
<div class="t" style="left:492.5px;top:462.75px;font-size:12.5px;letter-spacing:0.1px;color:#1a8cf0;font-weight:bold;">BODY</div>
<div class="t" style="left:759px;top:462.3px;font-size:13px;letter-spacing:0.25px;color:#1a8cf0;font-weight:bold;">Exact</div>
<div class="t" style="left:892px;top:462.3px;font-size:13px;color:#1a8cf0;font-weight:bold">3</div>
<div class="t" style="left:992px;top:462.3px;font-size:13px;letter-spacing:0.1px;color:#1a8cf0;font-weight:bold;">8.5</div>
<div class="t" style="left:1081.5px;top:462.3px;font-size:13px;letter-spacing:0.1px;color:#1a8cf0;font-weight:bold;">11.5</div>
<div class="t" style="left:1171px;top:462.3px;font-size:13px;letter-spacing:0.1px;color:#1a8cf0;font-weight:bold;">14</div>
<div class="t" style="left:1260px;top:462.3px;font-size:13px;letter-spacing:0.1px;color:#1a8cf0;font-weight:bold;">17.5</div>
<div class="t" style="left:1349px;top:462.3px;font-size:13px;letter-spacing:0.1px;color:#1a8cf0;font-weight:bold;">18</div>
<div class="t" style="left:1438px;top:462.3px;font-size:13px;letter-spacing:0.1px;color:#1a8cf0;font-weight:bold;">23</div>
<div class="t" style="left:1527px;top:462.3px;font-size:13px;letter-spacing:0.1px;color:#1a8cf0;font-weight:bold;">26</div>
<div class="t" style="left:1616px;top:462.3px;font-size:13px;letter-spacing:0.2px;color:#c6c6c6">Enter</div>
<div class="t" style="left:1716px;top:462.3px;font-size:13px;letter-spacing:0.2px;color:#c6c6c6">Enter</div>
<svg width="16" height="16" style="left:1815px;top:461px" fill="none" stroke="#6e6e6e" stroke-width="1.05" stroke-linejoin="round" stroke-linecap="round"><rect x="4.3" y="1.1" width="7.6" height="9.4" rx="2.6"/><path d="M4.3 4.2 H2.6 Q1.1 4.2 1.1 5.7 V12.2 Q1.1 13.7 2.6 13.7 H5.9 Q7.4 13.7 7.4 12.2 V10.5" stroke="#999"/></svg>
<svg width="16" height="16" style="left:1835px;top:461px" fill="none" stroke="#6e6e6e" stroke-width="1.05" stroke-linejoin="round" stroke-linecap="round"><path d="M14.5 2.2 Q15.3 3.1 14.4 4 L9.6 10 L7.1 7.8 L13 2 Q13.8 1.4 14.5 2.2 Z M7.1 7.8 Q4.6 7.6 3.6 10.2 Q3 12.4 1.2 13 Q5 14.4 7.6 12.5 Q9.1 11.3 9.6 10"/></svg>
<svg width="16" height="16" style="left:1858px;top:461px" fill="none" stroke="#6e6e6e" stroke-width="1.05" stroke-linejoin="round" stroke-linecap="round"><path d="M1 2.3 H12.8 M4.2 2.3 V1.2 H9.6 V2.3 M2 2.3 L3 13 Q3.2 14.5 4.6 14.5 H9.2 Q10.6 14.5 10.8 13 L11.8 2.3"/></svg>
<div class="a" style="left:327px;top:488px;width:1559px;height:38px;background:#fff;border-bottom:1px solid #e6e6e6"></div>
<div class="a" style="left:1246px;top:488px;width:88px;height:37px;background:#effbe9"></div>
<div class="a" style="left:878px;top:488px;width:99px;height:37px;background:#f9f9f9"></div>
<div class="a" style="left:977px;top:488px;width:1px;height:37px;background:#e6e6e6"></div>
<div class="a" style="left:1067px;top:488px;width:1px;height:37px;background:#e6e6e6"></div>
<div class="a" style="left:1156px;top:488px;width:1px;height:37px;background:#e6e6e6"></div>
<div class="a" style="left:1245px;top:488px;width:1px;height:37px;background:#e6e6e6"></div>
<div class="a" style="left:1334px;top:488px;width:1px;height:37px;background:#e6e6e6"></div>
<div class="a" style="left:1423px;top:488px;width:1px;height:37px;background:#e6e6e6"></div>
<div class="a" style="left:1512px;top:488px;width:1px;height:37px;background:#e6e6e6"></div>
<div class="a" style="left:1601px;top:488px;width:1px;height:37px;background:#e6e6e6"></div>
<div class="a" style="left:1701px;top:488px;width:1px;height:37px;background:#e6e6e6"></div>
<div class="a" style="left:1801px;top:488px;width:1px;height:37px;background:#e6e6e6"></div>
<div class="a" style="left:340px;top:500px;width:15px;height:14px;border-radius:3px;border:1px solid #d2d2d2;background:#fff"></div>
<div class="a" style="left:387.0px;top:504.0px;width:2px;height:2px;border-radius:.5px;background:#555"></div><div class="a" style="left:387.0px;top:508.4px;width:2px;height:2px;border-radius:.5px;background:#555"></div><div class="a" style="left:391.3px;top:504.0px;width:2px;height:2px;border-radius:.5px;background:#555"></div><div class="a" style="left:391.3px;top:508.4px;width:2px;height:2px;border-radius:.5px;background:#555"></div><div class="a" style="left:395.6px;top:504.0px;width:2px;height:2px;border-radius:.5px;background:#555"></div><div class="a" style="left:395.6px;top:508.4px;width:2px;height:2px;border-radius:.5px;background:#555"></div>
<div class="t" style="left:411px;top:501.15000000000003px;font-size:12px;letter-spacing:0.1px;color:#222;font-weight:normal;">B</div>
<div class="t" style="left:492.5px;top:501.15000000000003px;font-size:12px;letter-spacing:0.1px;color:#222;font-weight:normal;">ARMS</div>
<div class="t" style="left:759px;top:500.3px;font-size:13px;letter-spacing:0.25px;color:#222;font-weight:normal;">Multi</div>
<div class="t" style="left:992px;top:500.3px;font-size:13px;letter-spacing:0.1px;color:#222;font-weight:normal;">12</div>
<div class="t" style="left:1081.5px;top:500.3px;font-size:13px;letter-spacing:0.1px;color:#222;font-weight:normal;">15</div>
<div class="t" style="left:1171px;top:500.3px;font-size:13px;letter-spacing:0.1px;color:#222;font-weight:normal;">10</div>
<div class="t" style="left:1260px;top:500.3px;font-size:13px;letter-spacing:0.1px;color:#222;font-weight:normal;">0</div>
<div class="t" style="left:1349px;top:500.3px;font-size:13px;letter-spacing:0.1px;color:#222;font-weight:normal;">15</div>
<div class="t" style="left:1438px;top:500.3px;font-size:13px;letter-spacing:0.1px;color:#222;font-weight:normal;">15</div>
<div class="t" style="left:1527px;top:500.3px;font-size:13px;letter-spacing:0.1px;color:#222;font-weight:normal;">15</div>
<div class="t" style="left:1616px;top:500.3px;font-size:13px;letter-spacing:0.2px;color:#c6c6c6">Enter</div>
<div class="t" style="left:1716px;top:500.3px;font-size:13px;letter-spacing:0.2px;color:#c6c6c6">Enter</div>
<svg width="16" height="16" style="left:1815px;top:499px" fill="none" stroke="#6e6e6e" stroke-width="1.05" stroke-linejoin="round" stroke-linecap="round"><rect x="4.3" y="1.1" width="7.6" height="9.4" rx="2.6"/><path d="M4.3 4.2 H2.6 Q1.1 4.2 1.1 5.7 V12.2 Q1.1 13.7 2.6 13.7 H5.9 Q7.4 13.7 7.4 12.2 V10.5" stroke="#999"/></svg>
<svg width="16" height="16" style="left:1835px;top:499px" fill="none" stroke="#6e6e6e" stroke-width="1.05" stroke-linejoin="round" stroke-linecap="round"><path d="M14.5 2.2 Q15.3 3.1 14.4 4 L9.6 10 L7.1 7.8 L13 2 Q13.8 1.4 14.5 2.2 Z M7.1 7.8 Q4.6 7.6 3.6 10.2 Q3 12.4 1.2 13 Q5 14.4 7.6 12.5 Q9.1 11.3 9.6 10"/></svg>
<svg width="16" height="16" style="left:1858px;top:499px" fill="none" stroke="#6e6e6e" stroke-width="1.05" stroke-linejoin="round" stroke-linecap="round"><path d="M1 2.3 H12.8 M4.2 2.3 V1.2 H9.6 V2.3 M2 2.3 L3 13 Q3.2 14.5 4.6 14.5 H9.2 Q10.6 14.5 10.8 13 L11.8 2.3"/></svg>
<div class="a" style="left:327px;top:526px;width:1559px;height:38px;background:#fff;border-bottom:1px solid #e6e6e6"></div>
<div class="a" style="left:1246px;top:526px;width:88px;height:37px;background:#effbe9"></div>
<div class="a" style="left:878px;top:526px;width:99px;height:37px;background:#f9f9f9"></div>
<div class="a" style="left:977px;top:526px;width:1px;height:37px;background:#e6e6e6"></div>
<div class="a" style="left:1067px;top:526px;width:1px;height:37px;background:#e6e6e6"></div>
<div class="a" style="left:1156px;top:526px;width:1px;height:37px;background:#e6e6e6"></div>
<div class="a" style="left:1245px;top:526px;width:1px;height:37px;background:#e6e6e6"></div>
<div class="a" style="left:1334px;top:526px;width:1px;height:37px;background:#e6e6e6"></div>
<div class="a" style="left:1423px;top:526px;width:1px;height:37px;background:#e6e6e6"></div>
<div class="a" style="left:1512px;top:526px;width:1px;height:37px;background:#e6e6e6"></div>
<div class="a" style="left:1601px;top:526px;width:1px;height:37px;background:#e6e6e6"></div>
<div class="a" style="left:1701px;top:526px;width:1px;height:37px;background:#e6e6e6"></div>
<div class="a" style="left:1801px;top:526px;width:1px;height:37px;background:#e6e6e6"></div>
<div class="a" style="left:340px;top:538px;width:15px;height:14px;border-radius:3px;border:1px solid #d2d2d2;background:#fff"></div>
<div class="a" style="left:387.0px;top:542.0px;width:2px;height:2px;border-radius:.5px;background:#555"></div><div class="a" style="left:387.0px;top:546.4px;width:2px;height:2px;border-radius:.5px;background:#555"></div><div class="a" style="left:391.3px;top:542.0px;width:2px;height:2px;border-radius:.5px;background:#555"></div><div class="a" style="left:391.3px;top:546.4px;width:2px;height:2px;border-radius:.5px;background:#555"></div><div class="a" style="left:395.6px;top:542.0px;width:2px;height:2px;border-radius:.5px;background:#555"></div><div class="a" style="left:395.6px;top:546.4px;width:2px;height:2px;border-radius:.5px;background:#555"></div>
<div class="t" style="left:411px;top:539.15px;font-size:12px;letter-spacing:0.1px;color:#222;font-weight:normal;">C</div>
<div class="t" style="left:492.5px;top:539.15px;font-size:12px;letter-spacing:0.1px;color:#222;font-weight:normal;">LEGS</div>
<div class="t" style="left:759px;top:538.3px;font-size:13px;letter-spacing:0.25px;color:#222;font-weight:normal;">Exact</div>
<div class="t" style="left:992px;top:538.3px;font-size:13px;letter-spacing:0.1px;color:#222;font-weight:normal;">10</div>
<div class="t" style="left:1081.5px;top:538.3px;font-size:13px;letter-spacing:0.1px;color:#222;font-weight:normal;">15</div>
<div class="t" style="left:1171px;top:538.3px;font-size:13px;letter-spacing:0.1px;color:#222;font-weight:normal;">20</div>
<div class="t" style="left:1260px;top:538.3px;font-size:13px;letter-spacing:0.1px;color:#222;font-weight:normal;">25</div>
<div class="t" style="left:1349px;top:538.3px;font-size:13px;letter-spacing:0.1px;color:#222;font-weight:normal;">30</div>
<div class="t" style="left:1438px;top:538.3px;font-size:13px;letter-spacing:0.1px;color:#222;font-weight:normal;">0</div>
<div class="t" style="left:1527px;top:538.3px;font-size:13px;letter-spacing:0.1px;color:#222;font-weight:normal;">0</div>
<div class="t" style="left:1616px;top:538.3px;font-size:13px;color:#222">5</div>
<div class="t" style="left:1716px;top:538.3px;font-size:13px;color:#222">-5</div>
<svg width="16" height="16" style="left:1815px;top:537px" fill="none" stroke="#6e6e6e" stroke-width="1.05" stroke-linejoin="round" stroke-linecap="round"><rect x="4.3" y="1.1" width="7.6" height="9.4" rx="2.6"/><path d="M4.3 4.2 H2.6 Q1.1 4.2 1.1 5.7 V12.2 Q1.1 13.7 2.6 13.7 H5.9 Q7.4 13.7 7.4 12.2 V10.5" stroke="#999"/></svg>
<svg width="16" height="16" style="left:1835px;top:537px" fill="none" stroke="#6e6e6e" stroke-width="1.05" stroke-linejoin="round" stroke-linecap="round"><path d="M14.5 2.2 Q15.3 3.1 14.4 4 L9.6 10 L7.1 7.8 L13 2 Q13.8 1.4 14.5 2.2 Z M7.1 7.8 Q4.6 7.6 3.6 10.2 Q3 12.4 1.2 13 Q5 14.4 7.6 12.5 Q9.1 11.3 9.6 10"/></svg>
<svg width="16" height="16" style="left:1858px;top:537px" fill="none" stroke="#6e6e6e" stroke-width="1.05" stroke-linejoin="round" stroke-linecap="round"><path d="M1 2.3 H12.8 M4.2 2.3 V1.2 H9.6 V2.3 M2 2.3 L3 13 Q3.2 14.5 4.6 14.5 H9.2 Q10.6 14.5 10.8 13 L11.8 2.3"/></svg>
<div class="a" style="left:327px;top:564px;width:1559px;height:38px;background:#fff;border-bottom:1px solid #e6e6e6"></div>
<div class="a" style="left:1801px;top:564px;width:1px;height:37px;background:#e6e6e6"></div>
<div class="a" style="left:340px;top:576px;width:15px;height:14px;border-radius:3px;border:1px solid #d2d2d2;background:#fff"></div>
<div class="a" style="left:387.0px;top:580.0px;width:2px;height:2px;border-radius:.5px;background:#555"></div><div class="a" style="left:387.0px;top:584.4px;width:2px;height:2px;border-radius:.5px;background:#555"></div><div class="a" style="left:391.3px;top:580.0px;width:2px;height:2px;border-radius:.5px;background:#555"></div><div class="a" style="left:391.3px;top:584.4px;width:2px;height:2px;border-radius:.5px;background:#555"></div><div class="a" style="left:395.6px;top:580.0px;width:2px;height:2px;border-radius:.5px;background:#555"></div><div class="a" style="left:395.6px;top:584.4px;width:2px;height:2px;border-radius:.5px;background:#555"></div>
<div class="t" style="left:411px;top:577.0px;font-size:12.5px;font-weight:bold;color:#1a1a1a">STRETCHED</div>
<svg width="16" height="16" style="left:1837px;top:575px" fill="none" stroke="#6e6e6e" stroke-width="1.05" stroke-linejoin="round" stroke-linecap="round"><path d="M1.3 13.2 L2.2 9.8 L10.6 1.6 Q11.4 0.9 12.2 1.7 Q13 2.5 12.3 3.3 L3.9 11.6 Z M2.2 9.8 L3.9 11.6"/></svg>
<svg width="16" height="16" style="left:1858px;top:575px" fill="none" stroke="#6e6e6e" stroke-width="1.05" stroke-linejoin="round" stroke-linecap="round"><path d="M1 2.3 H12.8 M4.2 2.3 V1.2 H9.6 V2.3 M2 2.3 L3 13 Q3.2 14.5 4.6 14.5 H9.2 Q10.6 14.5 10.8 13 L11.8 2.3"/></svg>
<div class="a" style="left:327px;top:602px;width:1559px;height:38px;background:#fff;border-bottom:1px solid #e6e6e6"></div>
<div class="a" style="left:1246px;top:602px;width:88px;height:37px;background:#effbe9"></div>
<div class="a" style="left:977px;top:602px;width:1px;height:37px;background:#e6e6e6"></div>
<div class="a" style="left:1067px;top:602px;width:1px;height:37px;background:#e6e6e6"></div>
<div class="a" style="left:1156px;top:602px;width:1px;height:37px;background:#e6e6e6"></div>
<div class="a" style="left:1245px;top:602px;width:1px;height:37px;background:#e6e6e6"></div>
<div class="a" style="left:1334px;top:602px;width:1px;height:37px;background:#e6e6e6"></div>
<div class="a" style="left:1423px;top:602px;width:1px;height:37px;background:#e6e6e6"></div>
<div class="a" style="left:1512px;top:602px;width:1px;height:37px;background:#e6e6e6"></div>
<div class="a" style="left:1601px;top:602px;width:1px;height:37px;background:#e6e6e6"></div>
<div class="a" style="left:1701px;top:602px;width:1px;height:37px;background:#e6e6e6"></div>
<div class="a" style="left:1801px;top:602px;width:1px;height:37px;background:#e6e6e6"></div>
<div class="a" style="left:340px;top:614px;width:15px;height:14px;border-radius:3px;border:1px solid #d2d2d2;background:#fff"></div>
<div class="a" style="left:387.0px;top:618.0px;width:2px;height:2px;border-radius:.5px;background:#555"></div><div class="a" style="left:387.0px;top:622.4px;width:2px;height:2px;border-radius:.5px;background:#555"></div><div class="a" style="left:391.3px;top:618.0px;width:2px;height:2px;border-radius:.5px;background:#555"></div><div class="a" style="left:391.3px;top:622.4px;width:2px;height:2px;border-radius:.5px;background:#555"></div><div class="a" style="left:395.6px;top:618.0px;width:2px;height:2px;border-radius:.5px;background:#555"></div><div class="a" style="left:395.6px;top:622.4px;width:2px;height:2px;border-radius:.5px;background:#555"></div>
<div class="t" style="left:411px;top:614.75px;font-size:12.5px;letter-spacing:0.1px;color:#222;font-weight:bold;text-decoration:underline;text-underline-offset:2px;">A</div>
<div class="t" style="left:492.5px;top:614.75px;font-size:12.5px;letter-spacing:0.1px;color:#222;font-weight:bold;text-decoration:underline;text-underline-offset:2px;">STRETCHED BODY</div>
<div class="t" style="left:759px;top:614.3px;font-size:13px;letter-spacing:0.25px;color:#222;font-weight:bold;text-decoration:underline;text-underline-offset:2px;">Single</div>
<div class="t" style="left:892px;top:614.3px;font-size:13px;color:#222;font-weight:normal">5</div>
<div class="t" style="left:992px;top:614.3px;font-size:13px;letter-spacing:0.1px;color:#222;font-weight:bold;text-decoration:underline;text-underline-offset:2px;">5</div>
<div class="t" style="left:1081.5px;top:614.3px;font-size:13px;letter-spacing:0.1px;color:#222;font-weight:bold;text-decoration:underline;text-underline-offset:2px;">10</div>
<div class="t" style="left:1171px;top:614.3px;font-size:13px;letter-spacing:0.1px;color:#222;font-weight:bold;text-decoration:underline;text-underline-offset:2px;">15</div>
<div class="t" style="left:1260px;top:614.3px;font-size:13px;letter-spacing:0.1px;color:#222;font-weight:bold;text-decoration:underline;text-underline-offset:2px;">20</div>
<div class="t" style="left:1349px;top:614.3px;font-size:13px;letter-spacing:0.1px;color:#222;font-weight:bold;text-decoration:underline;text-underline-offset:2px;">25</div>
<div class="t" style="left:1438px;top:614.3px;font-size:13px;letter-spacing:0.1px;color:#222;font-weight:bold;text-decoration:underline;text-underline-offset:2px;">30</div>
<div class="t" style="left:1527px;top:614.3px;font-size:13px;letter-spacing:0.1px;color:#222;font-weight:bold;text-decoration:underline;text-underline-offset:2px;">35</div>
<div class="t" style="left:1616px;top:614.3px;font-size:13px;letter-spacing:0.2px;color:#c6c6c6">Enter</div>
<div class="t" style="left:1716px;top:614.3px;font-size:13px;letter-spacing:0.2px;color:#c6c6c6">Enter</div>
<svg width="16" height="16" style="left:1815px;top:613px" fill="none" stroke="#6e6e6e" stroke-width="1.05" stroke-linejoin="round" stroke-linecap="round"><rect x="4.3" y="1.1" width="7.6" height="9.4" rx="2.6"/><path d="M4.3 4.2 H2.6 Q1.1 4.2 1.1 5.7 V12.2 Q1.1 13.7 2.6 13.7 H5.9 Q7.4 13.7 7.4 12.2 V10.5" stroke="#999"/></svg>
<svg width="16" height="16" style="left:1835px;top:613px" fill="none" stroke="#6e6e6e" stroke-width="1.05" stroke-linejoin="round" stroke-linecap="round"><path d="M14.5 2.2 Q15.3 3.1 14.4 4 L9.6 10 L7.1 7.8 L13 2 Q13.8 1.4 14.5 2.2 Z M7.1 7.8 Q4.6 7.6 3.6 10.2 Q3 12.4 1.2 13 Q5 14.4 7.6 12.5 Q9.1 11.3 9.6 10"/></svg>
<svg width="16" height="16" style="left:1858px;top:613px" fill="none" stroke="#6e6e6e" stroke-width="1.05" stroke-linejoin="round" stroke-linecap="round"><path d="M1 2.3 H12.8 M4.2 2.3 V1.2 H9.6 V2.3 M2 2.3 L3 13 Q3.2 14.5 4.6 14.5 H9.2 Q10.6 14.5 10.8 13 L11.8 2.3"/></svg>
<div class="a" style="left:327px;top:640px;width:1559px;height:38px;background:#fff;border-bottom:1px solid #e6e6e6"></div>
<div class="a" style="left:1246px;top:640px;width:88px;height:37px;background:#effbe9"></div>
<div class="a" style="left:878px;top:640px;width:99px;height:37px;background:#f9f9f9"></div>
<div class="a" style="left:977px;top:640px;width:1px;height:37px;background:#e6e6e6"></div>
<div class="a" style="left:1067px;top:640px;width:1px;height:37px;background:#e6e6e6"></div>
<div class="a" style="left:1156px;top:640px;width:1px;height:37px;background:#e6e6e6"></div>
<div class="a" style="left:1245px;top:640px;width:1px;height:37px;background:#e6e6e6"></div>
<div class="a" style="left:1334px;top:640px;width:1px;height:37px;background:#e6e6e6"></div>
<div class="a" style="left:1423px;top:640px;width:1px;height:37px;background:#e6e6e6"></div>
<div class="a" style="left:1512px;top:640px;width:1px;height:37px;background:#e6e6e6"></div>
<div class="a" style="left:1601px;top:640px;width:1px;height:37px;background:#e6e6e6"></div>
<div class="a" style="left:1701px;top:640px;width:1px;height:37px;background:#e6e6e6"></div>
<div class="a" style="left:1801px;top:640px;width:1px;height:37px;background:#e6e6e6"></div>
<div class="a" style="left:340px;top:652px;width:15px;height:14px;border-radius:3px;border:1px solid #d2d2d2;background:#fff"></div>
<div class="a" style="left:387.0px;top:656.0px;width:2px;height:2px;border-radius:.5px;background:#555"></div><div class="a" style="left:387.0px;top:660.4px;width:2px;height:2px;border-radius:.5px;background:#555"></div><div class="a" style="left:391.3px;top:656.0px;width:2px;height:2px;border-radius:.5px;background:#555"></div><div class="a" style="left:391.3px;top:660.4px;width:2px;height:2px;border-radius:.5px;background:#555"></div><div class="a" style="left:395.6px;top:656.0px;width:2px;height:2px;border-radius:.5px;background:#555"></div><div class="a" style="left:395.6px;top:660.4px;width:2px;height:2px;border-radius:.5px;background:#555"></div>
<div class="t" style="left:411px;top:653.15px;font-size:12px;letter-spacing:0.1px;color:#222;font-weight:normal;">C</div>
<div class="t" style="left:492.5px;top:653.15px;font-size:12px;letter-spacing:0.1px;color:#222;font-weight:normal;">STRETCHED LEGS</div>
<div class="t" style="left:759px;top:652.3px;font-size:13px;letter-spacing:0.25px;color:#222;font-weight:normal;">Exact</div>
<div class="t" style="left:992px;top:652.3px;font-size:13px;letter-spacing:0.1px;color:#222;font-weight:normal;">11</div>
<div class="t" style="left:1081.5px;top:652.3px;font-size:13px;letter-spacing:0.1px;color:#222;font-weight:normal;">16</div>
<div class="t" style="left:1171px;top:652.3px;font-size:13px;letter-spacing:0.1px;color:#222;font-weight:normal;">21</div>
<div class="t" style="left:1260px;top:652.3px;font-size:13px;letter-spacing:0.1px;color:#222;font-weight:normal;">26</div>
<div class="t" style="left:1349px;top:652.3px;font-size:13px;letter-spacing:0.1px;color:#222;font-weight:normal;">31</div>
<div class="t" style="left:1438px;top:652.3px;font-size:13px;letter-spacing:0.1px;color:#222;font-weight:normal;">0</div>
<div class="t" style="left:1527px;top:652.3px;font-size:13px;letter-spacing:0.1px;color:#222;font-weight:normal;">0</div>
<div class="t" style="left:1616px;top:652.3px;font-size:13px;color:#222">5</div>
<div class="t" style="left:1716px;top:652.3px;font-size:13px;color:#222">-5</div>
<svg width="16" height="16" style="left:1815px;top:651px" fill="none" stroke="#6e6e6e" stroke-width="1.05" stroke-linejoin="round" stroke-linecap="round"><rect x="4.3" y="1.1" width="7.6" height="9.4" rx="2.6"/><path d="M4.3 4.2 H2.6 Q1.1 4.2 1.1 5.7 V12.2 Q1.1 13.7 2.6 13.7 H5.9 Q7.4 13.7 7.4 12.2 V10.5" stroke="#999"/></svg>
<svg width="16" height="16" style="left:1835px;top:651px" fill="none" stroke="#6e6e6e" stroke-width="1.05" stroke-linejoin="round" stroke-linecap="round"><path d="M14.5 2.2 Q15.3 3.1 14.4 4 L9.6 10 L7.1 7.8 L13 2 Q13.8 1.4 14.5 2.2 Z M7.1 7.8 Q4.6 7.6 3.6 10.2 Q3 12.4 1.2 13 Q5 14.4 7.6 12.5 Q9.1 11.3 9.6 10"/></svg>
<svg width="16" height="16" style="left:1858px;top:651px" fill="none" stroke="#6e6e6e" stroke-width="1.05" stroke-linejoin="round" stroke-linecap="round"><path d="M1 2.3 H12.8 M4.2 2.3 V1.2 H9.6 V2.3 M2 2.3 L3 13 Q3.2 14.5 4.6 14.5 H9.2 Q10.6 14.5 10.8 13 L11.8 2.3"/></svg>
<div class="a" style="left:327px;top:678px;width:1559px;height:38px;background:#fff;border-bottom:1px solid #e6e6e6"></div>
<div class="a" style="left:1246px;top:678px;width:88px;height:37px;background:#effbe9"></div>
<div class="a" style="left:977px;top:678px;width:1px;height:37px;background:#e6e6e6"></div>
<div class="a" style="left:1067px;top:678px;width:1px;height:37px;background:#e6e6e6"></div>
<div class="a" style="left:1156px;top:678px;width:1px;height:37px;background:#e6e6e6"></div>
<div class="a" style="left:1245px;top:678px;width:1px;height:37px;background:#e6e6e6"></div>
<div class="a" style="left:1334px;top:678px;width:1px;height:37px;background:#e6e6e6"></div>
<div class="a" style="left:1423px;top:678px;width:1px;height:37px;background:#e6e6e6"></div>
<div class="a" style="left:1512px;top:678px;width:1px;height:37px;background:#e6e6e6"></div>
<div class="a" style="left:1601px;top:678px;width:1px;height:37px;background:#e6e6e6"></div>
<div class="a" style="left:1701px;top:678px;width:1px;height:37px;background:#e6e6e6"></div>
<div class="a" style="left:1801px;top:678px;width:1px;height:37px;background:#e6e6e6"></div>
<div class="a" style="left:340px;top:690px;width:15px;height:14px;border-radius:3px;border:1px solid #d2d2d2;background:#fff"></div>
<div class="a" style="left:387.0px;top:694.0px;width:2px;height:2px;border-radius:.5px;background:#555"></div><div class="a" style="left:387.0px;top:698.4px;width:2px;height:2px;border-radius:.5px;background:#555"></div><div class="a" style="left:391.3px;top:694.0px;width:2px;height:2px;border-radius:.5px;background:#555"></div><div class="a" style="left:391.3px;top:698.4px;width:2px;height:2px;border-radius:.5px;background:#555"></div><div class="a" style="left:395.6px;top:694.0px;width:2px;height:2px;border-radius:.5px;background:#555"></div><div class="a" style="left:395.6px;top:698.4px;width:2px;height:2px;border-radius:.5px;background:#555"></div>
<div class="t" style="left:411px;top:691.15px;font-size:12px;letter-spacing:0.1px;color:#222;font-weight:normal;">A</div>
<div class="t" style="left:492.5px;top:691.15px;font-size:12px;letter-spacing:0.1px;color:#222;font-weight:normal;">(copy) STRETCHED BODY</div>
<div class="t" style="left:759px;top:690.3px;font-size:13px;letter-spacing:0.25px;color:#222;font-weight:normal;">Single</div>
<div class="t" style="left:892px;top:690.3px;font-size:13px;color:#222;font-weight:normal">5</div>
<div class="t" style="left:992px;top:690.3px;font-size:13px;letter-spacing:0.1px;color:#222;font-weight:normal;">5</div>
<div class="t" style="left:1081.5px;top:690.3px;font-size:13px;letter-spacing:0.1px;color:#222;font-weight:normal;">10</div>
<div class="t" style="left:1171px;top:690.3px;font-size:13px;letter-spacing:0.1px;color:#222;font-weight:normal;">15</div>
<div class="t" style="left:1260px;top:690.3px;font-size:13px;letter-spacing:0.1px;color:#222;font-weight:normal;">20</div>
<div class="t" style="left:1349px;top:690.3px;font-size:13px;letter-spacing:0.1px;color:#222;font-weight:normal;">25</div>
<div class="t" style="left:1438px;top:690.3px;font-size:13px;letter-spacing:0.1px;color:#222;font-weight:normal;">30</div>
<div class="t" style="left:1527px;top:690.3px;font-size:13px;letter-spacing:0.1px;color:#222;font-weight:normal;">35</div>
<div class="t" style="left:1616px;top:690.3px;font-size:13px;letter-spacing:0.2px;color:#c6c6c6">Enter</div>
<div class="t" style="left:1716px;top:690.3px;font-size:13px;letter-spacing:0.2px;color:#c6c6c6">Enter</div>
<svg width="16" height="16" style="left:1815px;top:689px" fill="none" stroke="#6e6e6e" stroke-width="1.05" stroke-linejoin="round" stroke-linecap="round"><rect x="4.3" y="1.1" width="7.6" height="9.4" rx="2.6"/><path d="M4.3 4.2 H2.6 Q1.1 4.2 1.1 5.7 V12.2 Q1.1 13.7 2.6 13.7 H5.9 Q7.4 13.7 7.4 12.2 V10.5" stroke="#999"/></svg>
<svg width="16" height="16" style="left:1835px;top:689px" fill="none" stroke="#6e6e6e" stroke-width="1.05" stroke-linejoin="round" stroke-linecap="round"><path d="M14.5 2.2 Q15.3 3.1 14.4 4 L9.6 10 L7.1 7.8 L13 2 Q13.8 1.4 14.5 2.2 Z M7.1 7.8 Q4.6 7.6 3.6 10.2 Q3 12.4 1.2 13 Q5 14.4 7.6 12.5 Q9.1 11.3 9.6 10"/></svg>
<svg width="16" height="16" style="left:1858px;top:689px" fill="none" stroke="#6e6e6e" stroke-width="1.05" stroke-linejoin="round" stroke-linecap="round"><path d="M1 2.3 H12.8 M4.2 2.3 V1.2 H9.6 V2.3 M2 2.3 L3 13 Q3.2 14.5 4.6 14.5 H9.2 Q10.6 14.5 10.8 13 L11.8 2.3"/></svg>
<div class="a" style="left:327px;top:445px;width:1561px;height:41px;border:5px solid #ef2a88"></div>
<div class="a" style="left:327px;top:716px;width:1559px;height:17px;background:#f7f7f7;border-top:1px solid #e6e6e6;border-bottom:1px solid #e6e6e6"></div>
<div class="a" style="left:977px;top:717px;width:1px;height:15px;background:#e6e6e6"></div>
<div class="a" style="left:981px;top:721px;width:887px;height:8px;border-radius:4px;background:#c4c4c4"></div>
<div class="card" style="left:326px;top:762px;width:1561px;height:44px"></div>
<svg width="8" height="12" style="left:342px;top:778px" fill="none" stroke="#777" stroke-width="1.1"><path d="M1.5 1L6.5 6L1.5 11"/></svg>
<div class="t" style="left:360px;top:777px;font-size:16px;letter-spacing:0.3px;color:#222">Comments</div>
<div class="badge" style="left:1837px;top:775px;width:23px">5</div>
<!-- toast -->
<div class="a" style="left:484px;top:754px;width:938px;height:58px;background:#fff;border-radius:8px;box-shadow:0 3px 12px rgba(0,0,0,.12),0 1px 3px rgba(0,0,0,.08)"></div>
<div class="t" style="left:512px;top:775px;font-size:14.5px;color:#222;-webkit-text-stroke:0.3px #222">1 selected</div>
<svg width="12" height="14" style="left:1286px;top:775.5px" fill="#fc1a8a"><path d="M0.5 2 H11.5 V3.2 H0.5 Z M3.5 2 V0.5 H8.5 V2 Z M1.3 3.8 H10.7 L10 13.5 H2 Z"/></svg>
<div class="t" style="left:1306px;top:776px;font-size:13px;letter-spacing:0.15px;color:#fc1a8a">Delete</div>
<div class="a" style="left:1358.5px;top:775.5px;width:1px;height:17px;background:#ddd"></div>
<svg width="14" height="14" style="left:1379px;top:775px" fill="none" stroke="#666" stroke-width="1.1"><path d="M1.5 1.5L12.5 12.5M12.5 1.5L1.5 12.5"/></svg>
<!-- bottom shade -->
<div class="a" style="left:59px;top:812px;width:1844px;height:47px;background:linear-gradient(to bottom,rgba(20,25,40,0),rgba(20,25,40,.03) 50%,rgba(20,25,40,.10));pointer-events:none"></div>

<div class="a" style="left:1896px;top:0;width:7px;height:7px;background:linear-gradient(225deg,#000 45%,transparent 50%)"></div>
<div class="a" style="left:1898px;top:854px;width:5px;height:5px;background:linear-gradient(315deg,#000 45%,transparent 50%)"></div>
</body></html>
